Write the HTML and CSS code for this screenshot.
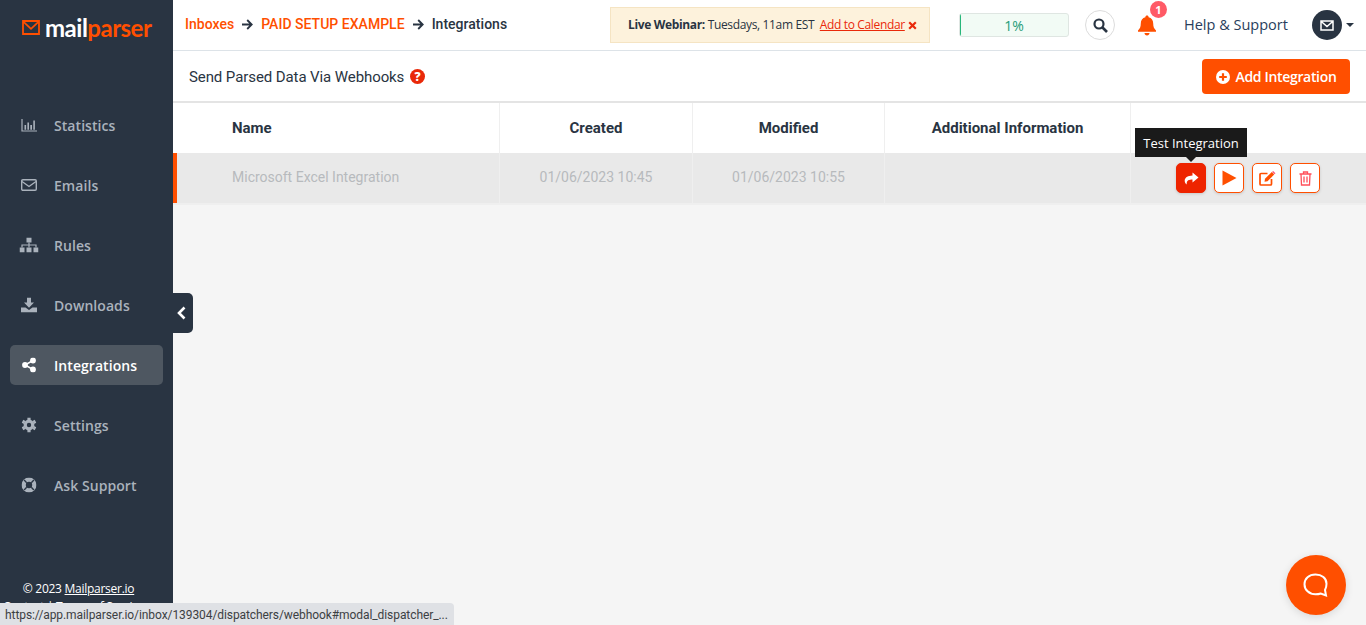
FILE: index.html
```html
<!DOCTYPE html>
<html lang="en">
<head>
<meta charset="utf-8">
<title>Mailparser - Integrations</title>
<link rel="stylesheet" href="styles.css">
</head>
<body>
<div class="app">
  <aside class="sidebar">
    <div class="logo">
      <svg class="logo-mark" width="18" height="15" viewBox="0 0 18 15"><path d="M1 1H17V14H1ZM1 1.300L9 8.800L17 1.300" fill="none" stroke="#ff4f00" stroke-width="1.800"/></svg>
      <span class="logo-text"><span class="logo-mail">mail</span><span class="logo-parser">parser</span></span>
    </div>
    <nav class="nav">
      <a class="nav-item"><svg class="nav-icon" width="18" height="14" viewBox="0 0 16 14"><path d="M1 1V13H16" fill="none" stroke="currentColor" stroke-width="1.200"/><path d="M3.500 7h1.600v4.800H3.500zM6.400 4.500H8v7.300H6.400zM9.300 7H11v4.800H9.300zM12.300 2.500h1.600v9.300h-1.600z" fill="currentColor"/></svg><span>Statistics</span></a>
      <a class="nav-item"><svg class="nav-icon" width="16" height="12" viewBox="0 0 16 12"><rect x="0.700" y="0.700" width="14.600" height="10.600" rx="1.200" fill="none" stroke="currentColor" stroke-width="1.400"/><path d="M1 2.500L8 7.500L15 2.500" fill="none" stroke="currentColor" stroke-width="1.400"/></svg><span>Emails</span></a>
      <a class="nav-item"><svg class="nav-icon" width="19" height="15" viewBox="0 0 19 15"><path d="M7 0h5v5H7zM0 10h5v5H0zM7 10h5v5H7zM14 10h5v5h-5z" fill="currentColor"/><path d="M9.500 5v3M2.500 10V7.500h14V10M9.500 7.500V10" fill="none" stroke="currentColor" stroke-width="1.200"/></svg><span>Rules</span></a>
      <a class="nav-item"><svg class="nav-icon" width="16" height="15" viewBox="0 0 16 15"><path d="M6 0h4v5h3L8 10.200 3 5h3z" fill="currentColor"/><path d="M0 10h4.500L8 12.500 11.500 10H16v5H0z" fill="currentColor"/></svg><span>Downloads</span></a>
      <a class="nav-item nav-active"><svg class="nav-icon" width="14" height="15" viewBox="0 0 14 15"><circle cx="11" cy="3" r="2.900" fill="currentColor"/><circle cx="3" cy="7.500" r="2.900" fill="currentColor"/><circle cx="11" cy="12" r="2.900" fill="currentColor"/><path d="M11 3L3 7.500L11 12" fill="none" stroke="currentColor" stroke-width="1.500"/></svg><span>Integrations</span></a>
      <a class="nav-item"><svg class="nav-icon" width="15" height="15" viewBox="0 0 15 15"><circle cx="7.500" cy="7.500" r="3.800" fill="none" stroke="currentColor" stroke-width="3.200"/><path d="M7.500 0V2.500M7.500 12.500V15M1 3.750L3.200 5M11.800 10L14 11.250M1 11.250L3.200 10M11.800 5L14 3.750" stroke="currentColor" stroke-width="3.200" fill="none"/></svg><span>Settings</span></a>
      <a class="nav-item"><svg class="nav-icon" width="15" height="15" viewBox="0 0 15 15"><circle cx="7.500" cy="7.500" r="7.500" fill="currentColor"/><circle cx="7.500" cy="7.500" r="3.200" fill="#293442"/><path d="M2.600 2.600L5.200 5.200M12.400 2.600L9.800 5.200M2.600 12.400L5.200 9.800M12.400 12.400L9.800 9.800" stroke="#293442" stroke-width="1.400"/></svg><span>Ask Support</span></a>
    </nav>
    <div class="side-foot">
      <div>© 2023 <a class="foot-link">Mailparser.io</a></div>
      <div class="foot-line2">Contact | Terms of Service</div>
    </div>
  </aside>
  <main class="main">
    <header class="topbar">
      <div class="crumbs">
        <a class="crumb-link">Inboxes</a>
        <svg class="crumb-arrow" width="12" height="11" viewBox="0 0 12 11"><path d="M1 5.500H10.500M6.200 1L10.700 5.500L6.200 10" fill="none" stroke="#293442" stroke-width="1.800"/></svg>
        <a class="crumb-link">PAID SETUP EXAMPLE</a>
        <svg class="crumb-arrow" width="12" height="11" viewBox="0 0 12 11"><path d="M1 5.500H10.500M6.200 1L10.700 5.500L6.200 10" fill="none" stroke="#293442" stroke-width="1.800"/></svg>
        <span class="crumb-now">Integrations</span>
      </div>
      <div class="webinar"><b>Live Webinar:</b>&nbsp;Tuesdays, 11am EST&nbsp;&nbsp;<a class="webinar-link">Add to Calendar</a><svg class="webinar-x" width="9" height="9" viewBox="0 0 9 9"><path d="M1.200 1.200L7.800 7.800M7.800 1.200L1.200 7.800" stroke="#e9290a" stroke-width="2.200"/></svg></div>
      <div class="usage"><span class="usage-fill"></span><span class="usage-text">1%</span></div>
      <button class="search-btn"><svg width="15" height="15" viewBox="0 0 15 15"><circle cx="6" cy="6" r="4.500" fill="none" stroke="#293442" stroke-width="2.200"/><path d="M9.500 9.500L14 14" stroke="#293442" stroke-width="2.600"/></svg></button>
      <div class="bell"><svg width="20" height="21" viewBox="0 0 20 21"><path d="M10 0.500c1 0 1.600.7 1.600 1.700 3 .7 4.600 3 4.600 6.300 0 3.700 1 5 2.800 7v1.200H1V15.500c1.800-2 2.800-3.300 2.800-7 0-3.300 1.600-5.600 4.600-6.300C8.400 1.200 9 .5 10 .5z" fill="#ff4f00"/><path d="M7.500 18h5c0 1.500-1.100 2.500-2.500 2.500S7.500 19.500 7.500 18z" fill="#ff4f00"/></svg><span class="badge">1</span></div>
      <a class="help">Help &amp; Support</a>
      <div class="avatar-wrap"><span class="avatar"><svg width="14" height="11" viewBox="0 0 14 11"><path d="M1 1H13V10H1ZM1 1.300L7 6.500L13 1.300" fill="none" stroke="#fff" stroke-width="1.500"/></svg></span><span class="caret"></span></div>
    </header>
    <section class="subbar">
      <div class="subtitle">Send Parsed Data Via Webhooks <svg class="help-q" width="15" height="15" viewBox="0 0 15 15"><circle cx="7.500" cy="7.500" r="7.500" fill="#e9290a"/><text x="7.500" y="11.500" text-anchor="middle" class="help-q-text">?</text></svg></div>
      <button class="add-btn"><svg width="14" height="14" viewBox="0 0 14 14"><circle cx="7" cy="7" r="7" fill="#fff"/><path d="M7 3.200V10.800M3.200 7H10.800" stroke="#ff4f00" stroke-width="2.200"/></svg>Add Integration</button>
    </section>
    <div class="table">
      <div class="row head">
        <div class="cell c-name">Name</div>
        <div class="cell c-date">Created</div>
        <div class="cell c-date2">Modified</div>
        <div class="cell c-info">Additional Information</div>
        <div class="cell c-act"></div>
      </div>
      <div class="row body-row">
        <div class="cell c-name">Microsoft Excel Integration</div>
        <div class="cell c-date">01/06/2023 10:45</div>
        <div class="cell c-date2">01/06/2023 10:55</div>
        <div class="cell c-info"></div>
        <div class="cell c-act">
          <div class="actions">
            <span class="act act-on"><span class="tip">Test Integration</span><svg width="16" height="13" viewBox="0 0 16 13"><path d="M9.500 0.500L15.500 5.500L9.500 10.500V7.500C6 7.500 3.500 8 3.700 12.500C.8 10.500 0 3.800 9.500 3.500Z" fill="#fff"/></svg></span>
            <span class="act"><svg width="15" height="16" viewBox="0 0 15 16"><path d="M0.500 0.500L14.500 8L0.500 15.500Z" fill="#ff4f00"/></svg></span>
            <span class="act"><svg width="17" height="15" viewBox="0 0 17 15"><path d="M8.500 2.500H2A1 1 0 0 0 1 3.500V13A1 1 0 0 0 2 14H11.500A1 1 0 0 0 12.500 13V8" fill="none" stroke="#ff4f00" stroke-width="1.700"/><path d="M5.500 10.800L6 7.800L12.800 1L15.200 3.400L8.500 10.200Z" fill="#ff4f00"/><path d="M13.600.5L16 2.800" stroke="#ff5a7a" stroke-width="1.500"/></svg></span>
            <span class="act"><svg width="13" height="15" viewBox="0 0 13 15"><path d="M0.500 3H12.500M4.500 3V1H8.500V3M2 3L2.500 14H10.500L11 3M5 5.500V11.500M8 5.500V11.500" fill="none" stroke="#ff4f5a" stroke-width="1.300"/></svg></span>
          </div>
        </div>
      </div>
    </div>
  </main>
  <button class="collapse"><svg width="9" height="14" viewBox="0 0 9 14"><path d="M7.500 1.500L2 7L7.500 12.500" fill="none" stroke="#fff" stroke-width="2.600"/></svg></button>
  <button class="chat"><svg width="26" height="25" viewBox="0 0 26 25"><path d="M12.500 1.500C18.800 1.500 23.500 5.300 23.500 10.800C23.500 13.500 22.800 15.500 22 17L23 22.500L17.800 20.500C16.300 21 14.500 21.300 12.500 21.300C6 21.300 1.500 16.800 1.500 11.200C1.500 5.600 6 1.500 12.500 1.500Z" fill="none" stroke="#fff" stroke-width="2"/></svg></button>
  <div class="status">https://app.mailparser.io/inbox/139304/dispatchers/webhook#modal_dispatcher_...</div>
</div>
</body>
</html>
```
FILE: styles.css
```css
* { box-sizing: border-box; }
html, body { margin: 0; height: 625px; overflow: hidden; }
body { font-family: "Open Sans", sans-serif; background: #f5f5f5; color: #293442; }
a { color: inherit; }
button { font-family: inherit; border: 0; padding: 0; cursor: pointer; }

.app { position: relative; display: flex; width: 1366px; height: 625px; overflow: hidden; }

.sidebar { width: 173px; flex: none; height: 625px; background: #293442; display: flex; flex-direction: column; color: #aab2bc; }
.logo { height: 50px; display: flex; align-items: flex-start; gap: 5px; padding: 20px 0 0 22px; }
.logo-mark { flex: none; }
.logo-text { font-family: "Lato", sans-serif; font-size: 24px; line-height: 20px; font-weight: 700; letter-spacing: -0.5px; margin-top: -2px; }
.logo-mail { color: #fff; }
.logo-parser { color: #ff4f00; }

.nav { margin-top: 55px; display: flex; flex-direction: column; gap: 20px; padding: 0 10px; }
.nav-item { height: 40px; display: flex; align-items: center; border-radius: 5px; font-size: 14px; font-weight: 600; letter-spacing: 0.06px; position: relative; padding-left: 44px; }
.nav-icon { position: absolute; left: 19px; top: 50%; transform: translate(-50%, -50%); }
.nav-active { background: #4e5761; color: #fff; }

.side-foot { margin-top: auto; height: 45px; padding-right: 16px; text-align: center; color: #fff; font-size: 12px; line-height: 18px; letter-spacing: -0.27px; white-space: nowrap; }
.foot-link { text-decoration: underline; }
.foot-line2 { padding-right: 10px; }

.main { flex: 1; min-width: 0; display: flex; flex-direction: column; }

.topbar { height: 51px; flex: none; background: #fff; border-bottom: 1px solid #dde3e8; display: flex; align-items: center; padding-left: 12px; }
.crumbs { display: flex; align-items: center; font-family: Roboto, sans-serif; font-size: 14px; font-weight: 500; letter-spacing: 0.02px; width: 425px; flex: none; padding-bottom: 2px; }
.crumb-link { color: #ff4f00; }
.crumb-arrow { margin: 0 8px 0 7px; }
.crumb-now { color: #293442; }

.webinar { width: 320px; height: 36px; flex: none; background: #fdf2dc; border: 1px solid #f5e4c3; display: flex; align-items: center; padding: 0 0 2px 17px; font-size: 12px; letter-spacing: -0.35px; color: #293442; white-space: nowrap; }
.webinar b { font-weight: 700; }
.webinar-link { color: #e9290a; text-decoration: underline; }
.webinar-x { margin-left: 3px; margin-top: 2px; }

.usage { position: relative; margin-left: 29px; width: 110px; height: 24px; flex: none; background: #f2fbf5; border: 1px solid #dfe6e2; border-radius: 3px; display: flex; align-items: center; justify-content: center; overflow: hidden; }
.usage-fill { position: absolute; left: 0; top: 0; bottom: 0; width: 1px; background: #28b67a; }
.usage-text { font-size: 14px; color: #1f9c78; }

.search-btn { margin-left: 16px; width: 30px; height: 30px; flex: none; border-radius: 50%; background: #fff; border: 1px solid #dcdcdc; display: flex; align-items: center; justify-content: center; }

.bell { position: relative; margin-left: 22px; width: 20px; height: 21px; flex: none; }
.badge { position: absolute; left: 13px; top: -14px; width: 17px; height: 17px; border-radius: 50%; background: #ff5a66; color: #fff; font-size: 11px; font-weight: 700; line-height: 17px; text-align: center; }

.help { margin-left: 27px; padding-bottom: 2px; font-size: 14.5px; color: #293e5c; white-space: nowrap; flex: none; }
.avatar-wrap { margin-left: 24px; display: flex; align-items: center; gap: 4px; flex: none; }
.avatar { width: 30px; height: 30px; border-radius: 50%; background: #293442; display: flex; align-items: center; justify-content: center; }
.caret { width: 0; height: 0; border-left: 4px solid transparent; border-right: 4px solid transparent; border-top: 4px solid #293442; }

.subbar { height: 52px; flex: none; background: #fff; border-bottom: 2px solid #e4e4e4; display: flex; align-items: center; justify-content: space-between; padding: 0 16px; }
.subtitle { padding-top: 1px; font-family: Roboto, sans-serif; font-size: 15px; letter-spacing: -0.09px; color: #293442; display: flex; align-items: center; gap: 2px; white-space: pre; }
.help-q-text { font-family: "Open Sans", sans-serif; font-size: 12px; font-weight: 800; fill: #fff; }
.add-btn { width: 148px; height: 35px; background: #ff4f00; color: #fff; border-radius: 4px; font-size: 14px; font-weight: 600; letter-spacing: -0.33px; display: flex; align-items: center; justify-content: center; gap: 6px; margin-top: 1px; }

.table { display: flex; flex-direction: column; font-family: Roboto, sans-serif; font-size: 14px; }
.row { display: flex; }
.head { height: 50px; background: #fff; font-size: 15px; font-weight: 700; color: #293442; }
.body-row { height: 50px; background: #e9e9e9; color: #b7babd; border-left: 4px solid #ff4f00; box-shadow: 0 2px 0 #efefef; }
.body-row .cell { padding-bottom: 2px; }
.cell { display: flex; align-items: center; justify-content: center; border-right: 1px solid #efefef; }
.c-name { width: 327px; justify-content: flex-start; padding-left: 59px; }
.body-row .c-name { width: 323px; padding-left: 55px; }
.c-date { width: 193px; }
.c-date2 { width: 192px; }
.c-info { width: 246px; }
.c-act { flex: 1; border-right: 0; }
.body-row .c-act { padding: 0 1px 0 0; }

.actions { display: flex; gap: 8px; }
.act { position: relative; width: 30px; height: 30px; border: 1px solid #ff4f00; border-radius: 5px; background: #fff; display: flex; align-items: center; justify-content: center; box-shadow: 0 1px 3px rgba(0,0,0,0.14); }
.act-on { background: #ee2400; border-color: #ee2400; }
.tip { position: absolute; left: -42px; top: -36px; width: 112px; height: 29px; background: #1a1a1a; color: #fff; font-family: "Open Sans", sans-serif; font-size: 13px; display: flex; align-items: center; justify-content: center; white-space: nowrap; }
.tip::after { content: ""; position: absolute; left: 50%; bottom: -5px; margin-left: -5px; border-left: 5px solid transparent; border-right: 5px solid transparent; border-top: 5px solid #1a1a1a; }

.collapse { position: absolute; left: 173px; top: 293px; width: 20px; height: 40px; padding-right: 4px; background: #293442; border-radius: 0 5px 5px 0; display: flex; align-items: center; justify-content: center; }
.chat { position: absolute; left: 1286px; top: 555px; width: 60px; height: 60px; border-radius: 50%; background: #ff4f00; box-shadow: 0 2px 8px rgba(0,0,0,0.12); display: flex; align-items: center; justify-content: center; }
.status { position: absolute; left: 0; bottom: 0; width: 454px; height: 22px; background: #dfe1e5; border-radius: 0 4px 0 0; font-family: Roboto, sans-serif; font-size: 12px; letter-spacing: -0.08px; line-height: 24px; padding-left: 5px; color: #3c4043; white-space: nowrap; overflow: hidden; }
```
